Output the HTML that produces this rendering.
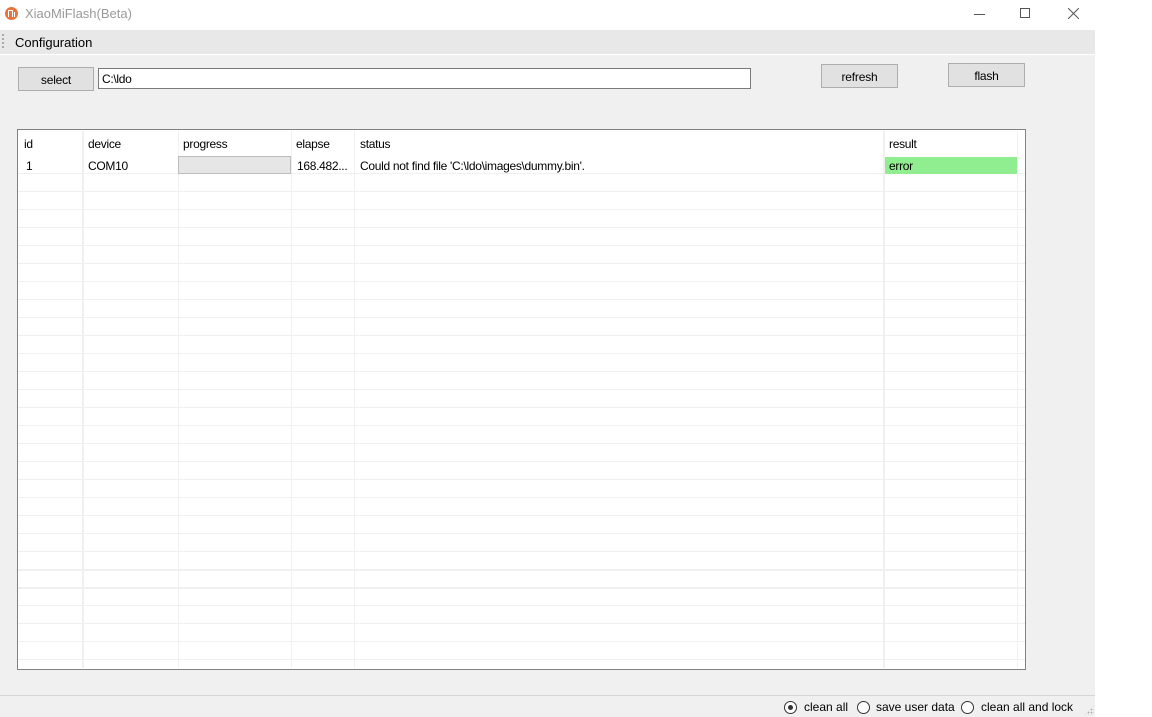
<!DOCTYPE html>
<html><head><style>
*{margin:0;padding:0;box-sizing:border-box}
body{width:1152px;height:717px;background:#fff;position:relative;overflow:hidden;font-family:"Liberation Sans",sans-serif;font-size:12px;color:#000}
.a{position:absolute}
.btn{position:absolute;background:#e1e1e1;border:1px solid #adadad;text-align:center;font-size:12px;letter-spacing:-0.2px}
.t{position:absolute;font-size:12px;letter-spacing:-0.3px;white-space:nowrap}
.vl{position:absolute;top:1px;bottom:1px;width:1px;background:#f0f0f0}
.rad{position:absolute;top:701px;width:13px;height:13px;border:1px solid #333;border-radius:50%;background:#fff}
</style></head><body>
<!-- title bar -->
<div class="a" style="left:5px;top:7px;width:13px;height:13px;border-radius:50%;background:#e8743b"></div>
<div class="a" style="left:8px;top:10px;width:5px;height:7px;border:1.3px solid #fff;border-bottom:none;border-left:none;border-top-right-radius:1px"></div>
<div class="a" style="left:8px;top:10px;width:1.3px;height:7px;background:#fff"></div>
<div class="a" style="left:14px;top:12px;width:1.3px;height:5px;background:#fff"></div>
<div class="a" style="left:25px;top:6px;font-size:13px;color:#999">XiaoMiFlash(Beta)</div>
<div class="a" style="left:974px;top:14px;width:11px;height:1px;background:#555"></div>
<div class="a" style="left:1020px;top:8px;width:10px;height:10px;border:1px solid #555"></div>
<svg class="a" style="left:1068px;top:8px" width="11" height="11"><path d="M0 0L11 11M11 0L0 11" stroke="#555" stroke-width="1"/></svg>
<!-- menu -->
<div class="a" style="left:0;top:30px;width:1095px;height:24px;background:#e8e8e8"></div>
<div class="a" style="left:2px;top:34px;width:2px;height:14px;border-left:2px dotted #aaa"></div>
<div class="a" style="left:15px;top:35px;font-size:13px;color:#000">Configuration</div>
<!-- body -->
<div class="a" style="left:0;top:55px;width:1095px;height:662px;background:#f0f0f0"></div>
<div class="btn" style="left:18px;top:67px;width:76px;height:24px;line-height:24px">select</div>
<div class="a" style="left:98px;top:68px;width:653px;height:21px;background:#fff;border:1px solid #7a7a7a;padding:3px 0 0 3px;letter-spacing:-0.3px">C:\ldo</div>
<div class="btn" style="left:821px;top:64px;width:77px;height:24px;line-height:24px">refresh</div>
<div class="btn" style="left:948px;top:63px;width:77px;height:24px;line-height:24px">flash</div>
<!-- table -->
<div class="a" style="left:17px;top:129px;width:1009px;height:541px;background:#fff;border:1px solid #828282;overflow:hidden">
 <div class="a" style="left:0;top:26px;width:1007px;height:513px;background:repeating-linear-gradient(to bottom,transparent 0,transparent 17px,#f0f0f0 17px,#f0f0f0 18px)"></div>
 <div class="a" style="left:0;top:439px;width:1007px;height:2px;background:#f0f0f0"></div>
 <div class="a" style="left:0;top:457px;width:1007px;height:2px;background:#f0f0f0"></div>
 <div class="vl" style="left:64px;width:2px"></div>
 <div class="vl" style="left:160px"></div>
 <div class="vl" style="left:273px"></div>
 <div class="vl" style="left:336px"></div>
 <div class="vl" style="left:865px;width:2px"></div>
 <div class="vl" style="left:999px"></div>
 <div class="a" style="left:160px;top:26px;width:113px;height:18px;background:#e6e6e6;border:1px solid #bcbcbc"></div>
 <div class="a" style="left:867px;top:27px;width:132px;height:17px;background:#90ee90"></div>
 <div class="t" style="left:6px;top:7px">id</div>
 <div class="t" style="left:70px;top:7px">device</div>
 <div class="t" style="left:165px;top:7px">progress</div>
 <div class="t" style="left:278px;top:7px">elapse</div>
 <div class="t" style="left:342px;top:7px">status</div>
 <div class="t" style="left:871px;top:7px">result</div>
 <div class="t" style="left:8px;top:29px">1</div>
 <div class="t" style="left:70px;top:29px">COM10</div>
 <div class="t" style="left:279px;top:29px">168.482...</div>
 <div class="t" style="left:342px;top:29px">Could not find file 'C:\ldo\images\dummy.bin'.</div>
 <div class="t" style="left:871px;top:29px">error</div>
</div>
<!-- status -->
<div class="a" style="left:0;top:695px;width:1095px;height:1px;background:#d7d7d7"></div>
<div class="rad" style="left:784px"></div>
<div class="a" style="left:788px;top:705px;width:5px;height:5px;border-radius:50%;background:#333"></div>
<div class="a" style="left:804px;top:700px;font-size:12px">clean all</div>
<div class="rad" style="left:857px"></div>
<div class="a" style="left:876px;top:700px;font-size:12px">save user data</div>
<div class="rad" style="left:961px"></div>
<div class="a" style="left:981px;top:700px;font-size:12px">clean all and lock</div>
<div class="a" style="left:1084px;top:705px;width:10px;height:10px;background:radial-gradient(circle,#aaa 0.7px,transparent 1px) 0 0/3px 3px;clip-path:polygon(100% 0,100% 100%,0 100%)"></div>
</body></html>
